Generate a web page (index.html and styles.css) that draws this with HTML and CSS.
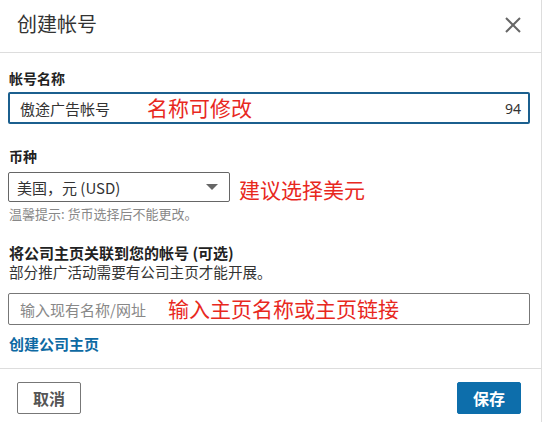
FILE: index.html
```html
<!DOCTYPE html>
<html lang="zh-CN">
<head>
<meta charset="utf-8">
<link rel="stylesheet" href="styles.css">
</head>
<body>
<div class="dialog">
  <div class="header">
    <h1 class="title">创建帐号</h1>
    <svg class="close" width="16" height="16" viewBox="0 0 16 16"><path d="M1 1 L15 15 M15 1 L1 15" stroke="#666" stroke-width="2" fill="none"/></svg>
  </div>
  <div class="content">
    <div class="label">帐号名称</div>
    <div class="field">
      <div class="input focused"><span class="value">傲途广告帐号</span><span class="count">94</span></div>
      <span class="note note-name">名称可修改</span>
    </div>

    <div class="label label-gap">币种</div>
    <div class="select-row">
      <div class="select"><span class="value">美国，元 (USD)</span><span class="arrow"></span></div>
      <span class="note-inline">建议选择美元</span>
    </div>
    <div class="hint">温馨提示: 货币选择后不能更改。</div>

    <div class="label label-gap2">将公司主页关联到您的帐号 (可选)</div>
    <div class="desc">部分推广活动需要有公司主页才能开展。</div>
    <div class="field field-page">
      <div class="input plain"><span class="placeholder">输入现有名称/网址</span></div>
      <span class="note note-page">输入主页名称或主页链接</span>
    </div>
    <a class="link">创建公司主页</a>
  </div>
  <div class="footer">
    <button class="btn cancel">取消</button>
    <button class="btn save">保存</button>
  </div>
</div>
</body>
</html>
```
FILE: styles.css
```css
* { box-sizing: border-box; }
html, body { margin: 0; padding: 0; background: #fff; }
body {
  font-family: "Noto Sans", "Noto Sans CJK SC", sans-serif;
  color: #333;
  font-size: 14px;
}
.dialog {
  width: 542px;
  height: 422px;
  border-right: 1px solid #ddd;
}
.header {
  height: 53px;
  border-bottom: 1px solid #ddd;
  display: flex;
  align-items: center;
  justify-content: space-between;
  padding: 0 20px 0 17px;
}
.title {
  margin: -4px 0 0 0;
  font-size: 20px;
  font-weight: normal;
  line-height: 28px;
  color: #333;
  font-family: "Noto Sans CJK SC", sans-serif;
}
.close { margin-top: -3px; }
.content {
  padding: 15px 11px 14px 8px;
  border-bottom: 1px solid #ddd;
}
.label {
  font-weight: bold;
  font-size: 14px;
  line-height: 20px;
  color: #222;
  padding-left: 1px;
  margin-bottom: 4px;
  font-family: "Noto Sans CJK SC", sans-serif;
}
.label-gap { margin-top: 22px; margin-bottom: 6px; }
.label-gap2 {
  margin-top: 22px;
  margin-bottom: 0;
  line-height: 18px;
  font-size: 15px;
}
.field { position: relative; }
.input {
  height: 32px;
  display: flex;
  align-items: center;
  justify-content: space-between;
}
.input.focused {
  border: 2px solid #1b5f8e;
  border-radius: 2px;
  padding: 0 7px 0 10px;
}
.input.plain {
  border: 1px solid #777;
  border-radius: 2px;
  padding: 0 11px;
}
.value {
  color: #333;
  font-size: 15px;
  font-family: "Noto Sans CJK SC", sans-serif;
}
.count { color: #333; font-size: 14px; }
.placeholder {
  color: #888;
  font-size: 15px;
  font-family: "Noto Sans CJK SC", sans-serif;
}
.note {
  position: absolute;
  top: 50%;
  transform: translateY(-55%);
  color: #e8281e;
  font-size: 21px;
  line-height: 26px;
  font-family: "Noto Sans CJK SC", sans-serif;
}
.note-name { left: 139px; }
.note-page { left: 160px; }
.select-row {
  display: flex;
  align-items: center;
  gap: 9px;
}
.select {
  width: 222px;
  height: 30px;
  border: 1px solid #666;
  border-radius: 2px;
  display: flex;
  align-items: center;
  justify-content: space-between;
  padding: 0 11px 0 8px;
}
.arrow {
  width: 0;
  height: 0;
  border-left: 6px solid transparent;
  border-right: 6px solid transparent;
  border-top: 6px solid #666;
}
.note-inline {
  color: #e8281e;
  font-size: 21px;
  line-height: 26px;
  margin-top: 3px;
  font-family: "Noto Sans CJK SC", sans-serif;
}
.hint {
  margin-top: 4px;
  font-size: 13px;
  line-height: 16px;
  color: #888;
  padding-left: 1px;
  font-family: "Noto Sans CJK SC", sans-serif;
}
.desc {
  margin-top: 1px;
  font-size: 14.6px;
  line-height: 18px;
  color: #333;
  padding-left: 1px;
  font-family: "Noto Sans CJK SC", sans-serif;
}
.field-page { margin-top: 12px; }
.link {
  display: block;
  margin-top: 9px;
  line-height: 20px;
  font-size: 15px;
  font-weight: bold;
  color: #0e6aa3;
  padding-left: 1px;
  font-family: "Noto Sans CJK SC", sans-serif;
}
.footer {
  display: flex;
  justify-content: space-between;
  padding: 13px 20px 0 17px;
}
.btn {
  height: 32px;
  font-size: 16px;
  font-weight: bold;
  font-family: "Noto Sans CJK SC", sans-serif;
  border-radius: 2px;
  padding: 0;
  line-height: 30px;
}
.cancel {
  width: 64px;
  background: #fff;
  border: 1px solid #777;
  color: #555;
}
.save {
  width: 64px;
  background: #0d6eab;
  border: 1px solid #0d6eab;
  color: #fff;
}
```
